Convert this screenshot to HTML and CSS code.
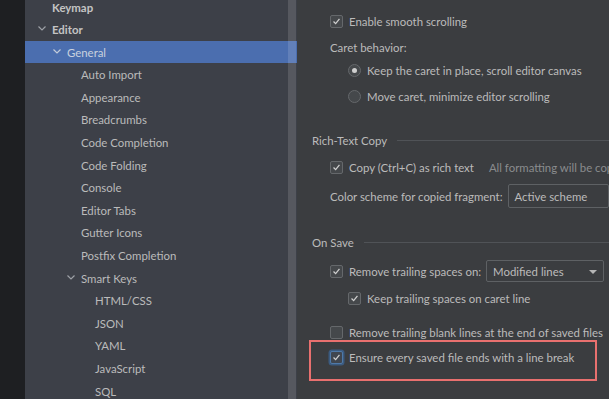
FILE: index.html
```html
<!DOCTYPE html>
<html lang="en">
<head>
  <meta charset="UTF-8">
  <title>Settings - Editor General</title>
  <link rel="stylesheet" href="styles.css">
</head>
<body>
  <div class="strip"></div>

  <div class="sidebar">
    <div class="tree">
      <div class="node bold lvl0">Keymap</div>
      <div class="node bold lvl0 open"><svg class="chev" viewBox="0 0 10 10"><path d="M1.5 3.5 L5 7 L8.5 3.5"/></svg>Editor</div>
      <div class="node lvl1 open selected"><svg class="chev" viewBox="0 0 10 10"><path d="M1.5 3.5 L5 7 L8.5 3.5"/></svg>General</div>
      <div class="node lvl2">Auto Import</div>
      <div class="node lvl2">Appearance</div>
      <div class="node lvl2">Breadcrumbs</div>
      <div class="node lvl2">Code Completion</div>
      <div class="node lvl2">Code Folding</div>
      <div class="node lvl2">Console</div>
      <div class="node lvl2">Editor Tabs</div>
      <div class="node lvl2">Gutter Icons</div>
      <div class="node lvl2">Postfix Completion</div>
      <div class="node lvl2 open"><svg class="chev" viewBox="0 0 10 10"><path d="M1.5 3.5 L5 7 L8.5 3.5"/></svg>Smart Keys</div>
      <div class="node lvl3">HTML/CSS</div>
      <div class="node lvl3">JSON</div>
      <div class="node lvl3">YAML</div>
      <div class="node lvl3">JavaScript</div>
      <div class="node lvl3">SQL</div>
    </div>
    <div class="scrollbar"></div>
  </div>

  <div class="main">
    <div class="row r-smooth">
      <span class="check on"><svg viewBox="0 0 13 13"><path d="M3 6.5 L5.5 9 L10 3.5"/></svg></span>
      Enable smooth scrolling
    </div>
    <div class="row r-caret">Caret behavior:</div>
    <div class="row r-radio1 sub">
      <span class="radio on"></span>
      Keep the caret in place, scroll editor canvas
    </div>
    <div class="row r-radio2 sub">
      <span class="radio"></span>
      Move caret, minimize editor scrolling
    </div>

    <div class="heading r-rich"><span>Rich-Text Copy</span><i class="line"></i></div>
    <div class="row r-copy">
      <span class="check on"><svg viewBox="0 0 13 13"><path d="M3 6.5 L5.5 9 L10 3.5"/></svg></span>
      Copy (Ctrl+C) as rich text
      <span class="hint">All formatting will be copied</span>
    </div>
    <div class="row r-scheme">
      Color scheme for copied fragment:
      <span class="combo wide">Active scheme</span>
    </div>

    <div class="heading r-save"><span>On Save</span><i class="line"></i></div>
    <div class="row r-trail">
      <span class="check on"><svg viewBox="0 0 13 13"><path d="M3 6.5 L5.5 9 L10 3.5"/></svg></span>
      Remove trailing spaces on:
      <span class="combo small">Modified lines<b class="arrow"></b></span>
    </div>
    <div class="row r-keep sub">
      <span class="check on"><svg viewBox="0 0 13 13"><path d="M3 6.5 L5.5 9 L10 3.5"/></svg></span>
      Keep trailing spaces on caret line
    </div>
    <div class="row r-blank">
      <span class="check"></span>
      Remove trailing blank lines at the end of saved files
    </div>
    <div class="highlight">
      <div class="row r-ensure">
        <span class="check on focus"><svg viewBox="0 0 13 13"><path d="M3 6.5 L5.5 9 L10 3.5"/></svg></span>
        Ensure every saved file ends with a line break
      </div>
    </div>
  </div>
</body>
</html>
```

FILE: styles.css
```css
body {
  margin: 0;
  height: 399px;
  overflow: hidden;
  display: flex;
  font-family: Lato, "Noto Sans", sans-serif;
  font-size: 11.4px;
  color: #bbbbbb;
  background: #3b3d40;
}

.strip {
  width: 25px;
  flex: none;
  background: #1e1f22;
}

/* left tree */
.sidebar {
  width: 272px;
  flex: none;
  position: relative;
  background: #3d4048;
  overflow: hidden;
}

.tree {
  margin-top: -4.3px;
}

.node {
  height: 22.6px;
  display: flex;
  align-items: center;
  white-space: nowrap;
}

.node.bold {
  font-weight: bold;
  color: #c4c4c4;
}

.lvl0 { padding-left: 27px; }
.lvl1 { padding-left: 42px; }
.lvl2 { padding-left: 56px; }
.lvl3 { padding-left: 70px; }

.node.open .chev {
  margin-left: -15px;
  margin-right: 5px;
}

.chev {
  width: 10px;
  height: 10px;
  fill: none;
  stroke: #9da0a6;
  stroke-width: 1.2;
  margin-top: -3px;
}

.node.selected {
  background: #4b6eaf;
  color: #c9d1de;
}

.node.selected .chev {
  stroke: #c2cbd9;
}

.scrollbar {
  position: absolute;
  top: 0;
  bottom: 0;
  left: 263px;
  width: 8px;
  background: rgba(255, 255, 255, 0.13);
}

/* right panel */
.main {
  flex: 1;
  background: #3b3d40;
  padding-top: 10px;
  overflow: hidden;
  white-space: nowrap;
}

.row {
  height: 22px;
  display: flex;
  align-items: center;
  padding-left: 33px;
}

.row.sub {
  padding-left: 51px;
}

.r-caret { margin-top: 4px; }
.r-radio1 { margin-top: 1px; }
.r-radio2 { margin-top: 4px; }
.r-copy { margin-top: 5px; }
.r-scheme { margin-top: 6px; height: 24px; }
.r-trail { margin-top: 7px; }
.r-keep { margin-top: 5px; }
.r-blank { margin-top: 12px; }

.heading {
  height: 22px;
  display: flex;
  align-items: center;
  padding-left: 15px;
}

.r-rich { margin-top: 22px; }
.r-save { margin-top: 23px; }

.heading .line {
  flex: 1;
  height: 1px;
  background: #505357;
  margin-left: 10px;
}

.check {
  width: 11px;
  height: 11px;
  border: 1px solid #65686b;
  border-radius: 2px;
  background: #45484b;
  margin-right: 6px;
  flex: none;
  display: flex;
}

.check svg {
  width: 11px;
  height: 11px;
  fill: none;
  stroke: #d0d0d0;
  stroke-width: 1.5;
}

.check.focus {
  border-color: #4f79a8;
  box-shadow: 0 0 0 1.5px #3b5b80;
  background: #40464f;
}

.radio {
  width: 11px;
  height: 11px;
  border: 1px solid #65686b;
  border-radius: 50%;
  background: #45484b;
  margin-right: 6px;
  flex: none;
  display: flex;
  align-items: center;
  justify-content: center;
}

.radio.on::after {
  content: "";
  width: 5px;
  height: 5px;
  border-radius: 50%;
  background: #cfcfcf;
}

.hint {
  color: #8a8c8e;
  margin-left: 15px;
}

.combo {
  border: 1px solid #5e6164;
  border-radius: 2px;
  height: 100%;
  box-sizing: border-box;
  display: flex;
  align-items: center;
  padding-left: 6px;
  margin-left: 5px;
  position: relative;
}

.combo.wide {
  width: 140px;
}

.combo.small {
  width: 118px;
}

.arrow {
  position: absolute;
  right: 6px;
  top: 9px;
  width: 0;
  height: 0;
  border-left: 4px solid transparent;
  border-right: 4px solid transparent;
  border-top: 4px solid #b5b5b5;
}

.highlight {
  position: relative;
  margin: -3px 0 0 12px;
  width: 284px;
  height: 33px;
  border: 2px solid #e8706f;
  box-sizing: content-box;
  padding-top: 4px;
}

.highlight .row {
  padding-left: 19px;
}
```
